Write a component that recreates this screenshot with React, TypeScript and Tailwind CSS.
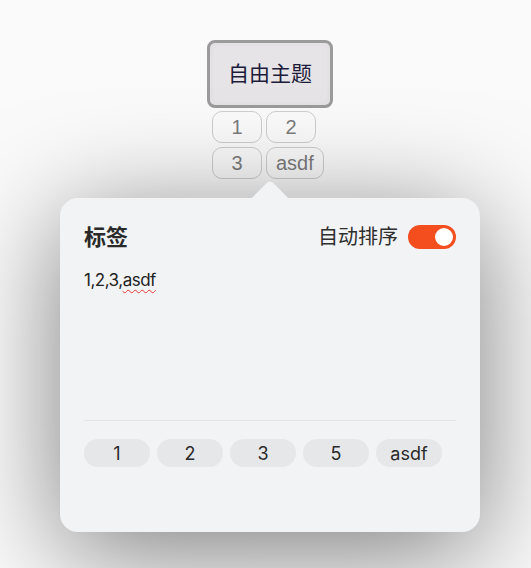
import React, { useState } from 'react';

const font = { fontFamily: 'Inter, "Noto Sans CJK SC", sans-serif' };
const arial = { fontFamily: '"Liberation Sans", Arial, sans-serif' };

const TopTag: React.FC<{ label: string }> = ({ label }) => (
  <div
    className="h-[32px] min-w-[50px] px-[9px] flex items-center justify-center rounded-[10px] border border-[#cdcdcd] text-[20px] text-[#7c7c7c]"
    style={arial}
  >
    {label}
  </div>
);

const App: React.FC = () => {
  const [autoSort, setAutoSort] = useState(true);
  const chips = ['1', '2', '3', '5', 'asdf'];

  return (
    <div className="w-[531px] h-[568px] bg-[#fafafa] overflow-hidden" style={font}>
      <div className="w-[420px] ml-[60px] pt-[40px] flex flex-col items-center">
        <button className="w-[126px] h-[68px] rounded-[8px] border-[3px] border-[#9b9b9b] bg-[#e3e1e3] p-[3px] text-[21px] text-[#1c1b3a]">
          <span className="w-full h-full rounded-[7px] bg-[#e6e4e6] flex items-center justify-center">自由主题</span>
        </button>
        <div className="mt-[3px] flex flex-col gap-[4px] w-[116px]">
          <div className="flex gap-[4px]">
            <TopTag label="1" />
            <TopTag label="2" />
          </div>
          <div className="flex gap-[4px]">
            <TopTag label="3" />
            <TopTag label="asdf" />
          </div>
        </div>
      </div>

      <div className="relative ml-[60px] mt-[19px] w-[420px] h-[334px] rounded-[18px] bg-[#f2f3f5] shadow-[0_20px_110px_rgba(0,0,0,0.5)] px-[24px] pt-[22px] flex flex-col">
        <div className="absolute -top-[12px] left-[195px] w-[30px] h-[30px] rotate-45 rounded-[5px] bg-[#f2f3f5]" />
        <div className="relative flex items-center justify-between h-[34px]">
          <span className="text-[22px] font-bold text-[#2a2a2a]">标签</span>
          <div className="flex items-center gap-[10px]">
            <span className="text-[20px] text-[#2e2e2e]">自动排序</span>
            <button
              onClick={() => setAutoSort(!autoSort)}
              className={`w-[48px] h-[24px] rounded-full flex items-center px-[3px] ${autoSort ? 'bg-[#f44d1e] justify-end' : 'bg-[#ccc] justify-start'}`}
            >
              <span className="w-[18px] h-[18px] rounded-full bg-white" />
            </button>
          </div>
        </div>
        <div className="relative mt-[14px] h-[152px] text-[17px] text-[#222] leading-[24px] tracking-[-0.5px]">
          1,2,3,<span className="underline decoration-wavy decoration-[#e53935] decoration-1 underline-offset-[3px]">asdf</span>
        </div>
        <div className="h-px bg-[#e3e4e7]" />
        <div className="mt-[18px] flex gap-[7px]">
          {chips.map((c) => (
            <div key={c} className="w-[66px] h-[28px] rounded-full bg-[#e6e7e9] flex items-center justify-center text-[18px] text-[#2a2a2a]">
              {c}
            </div>
          ))}
        </div>
      </div>
    </div>
  );
};

export default App;
